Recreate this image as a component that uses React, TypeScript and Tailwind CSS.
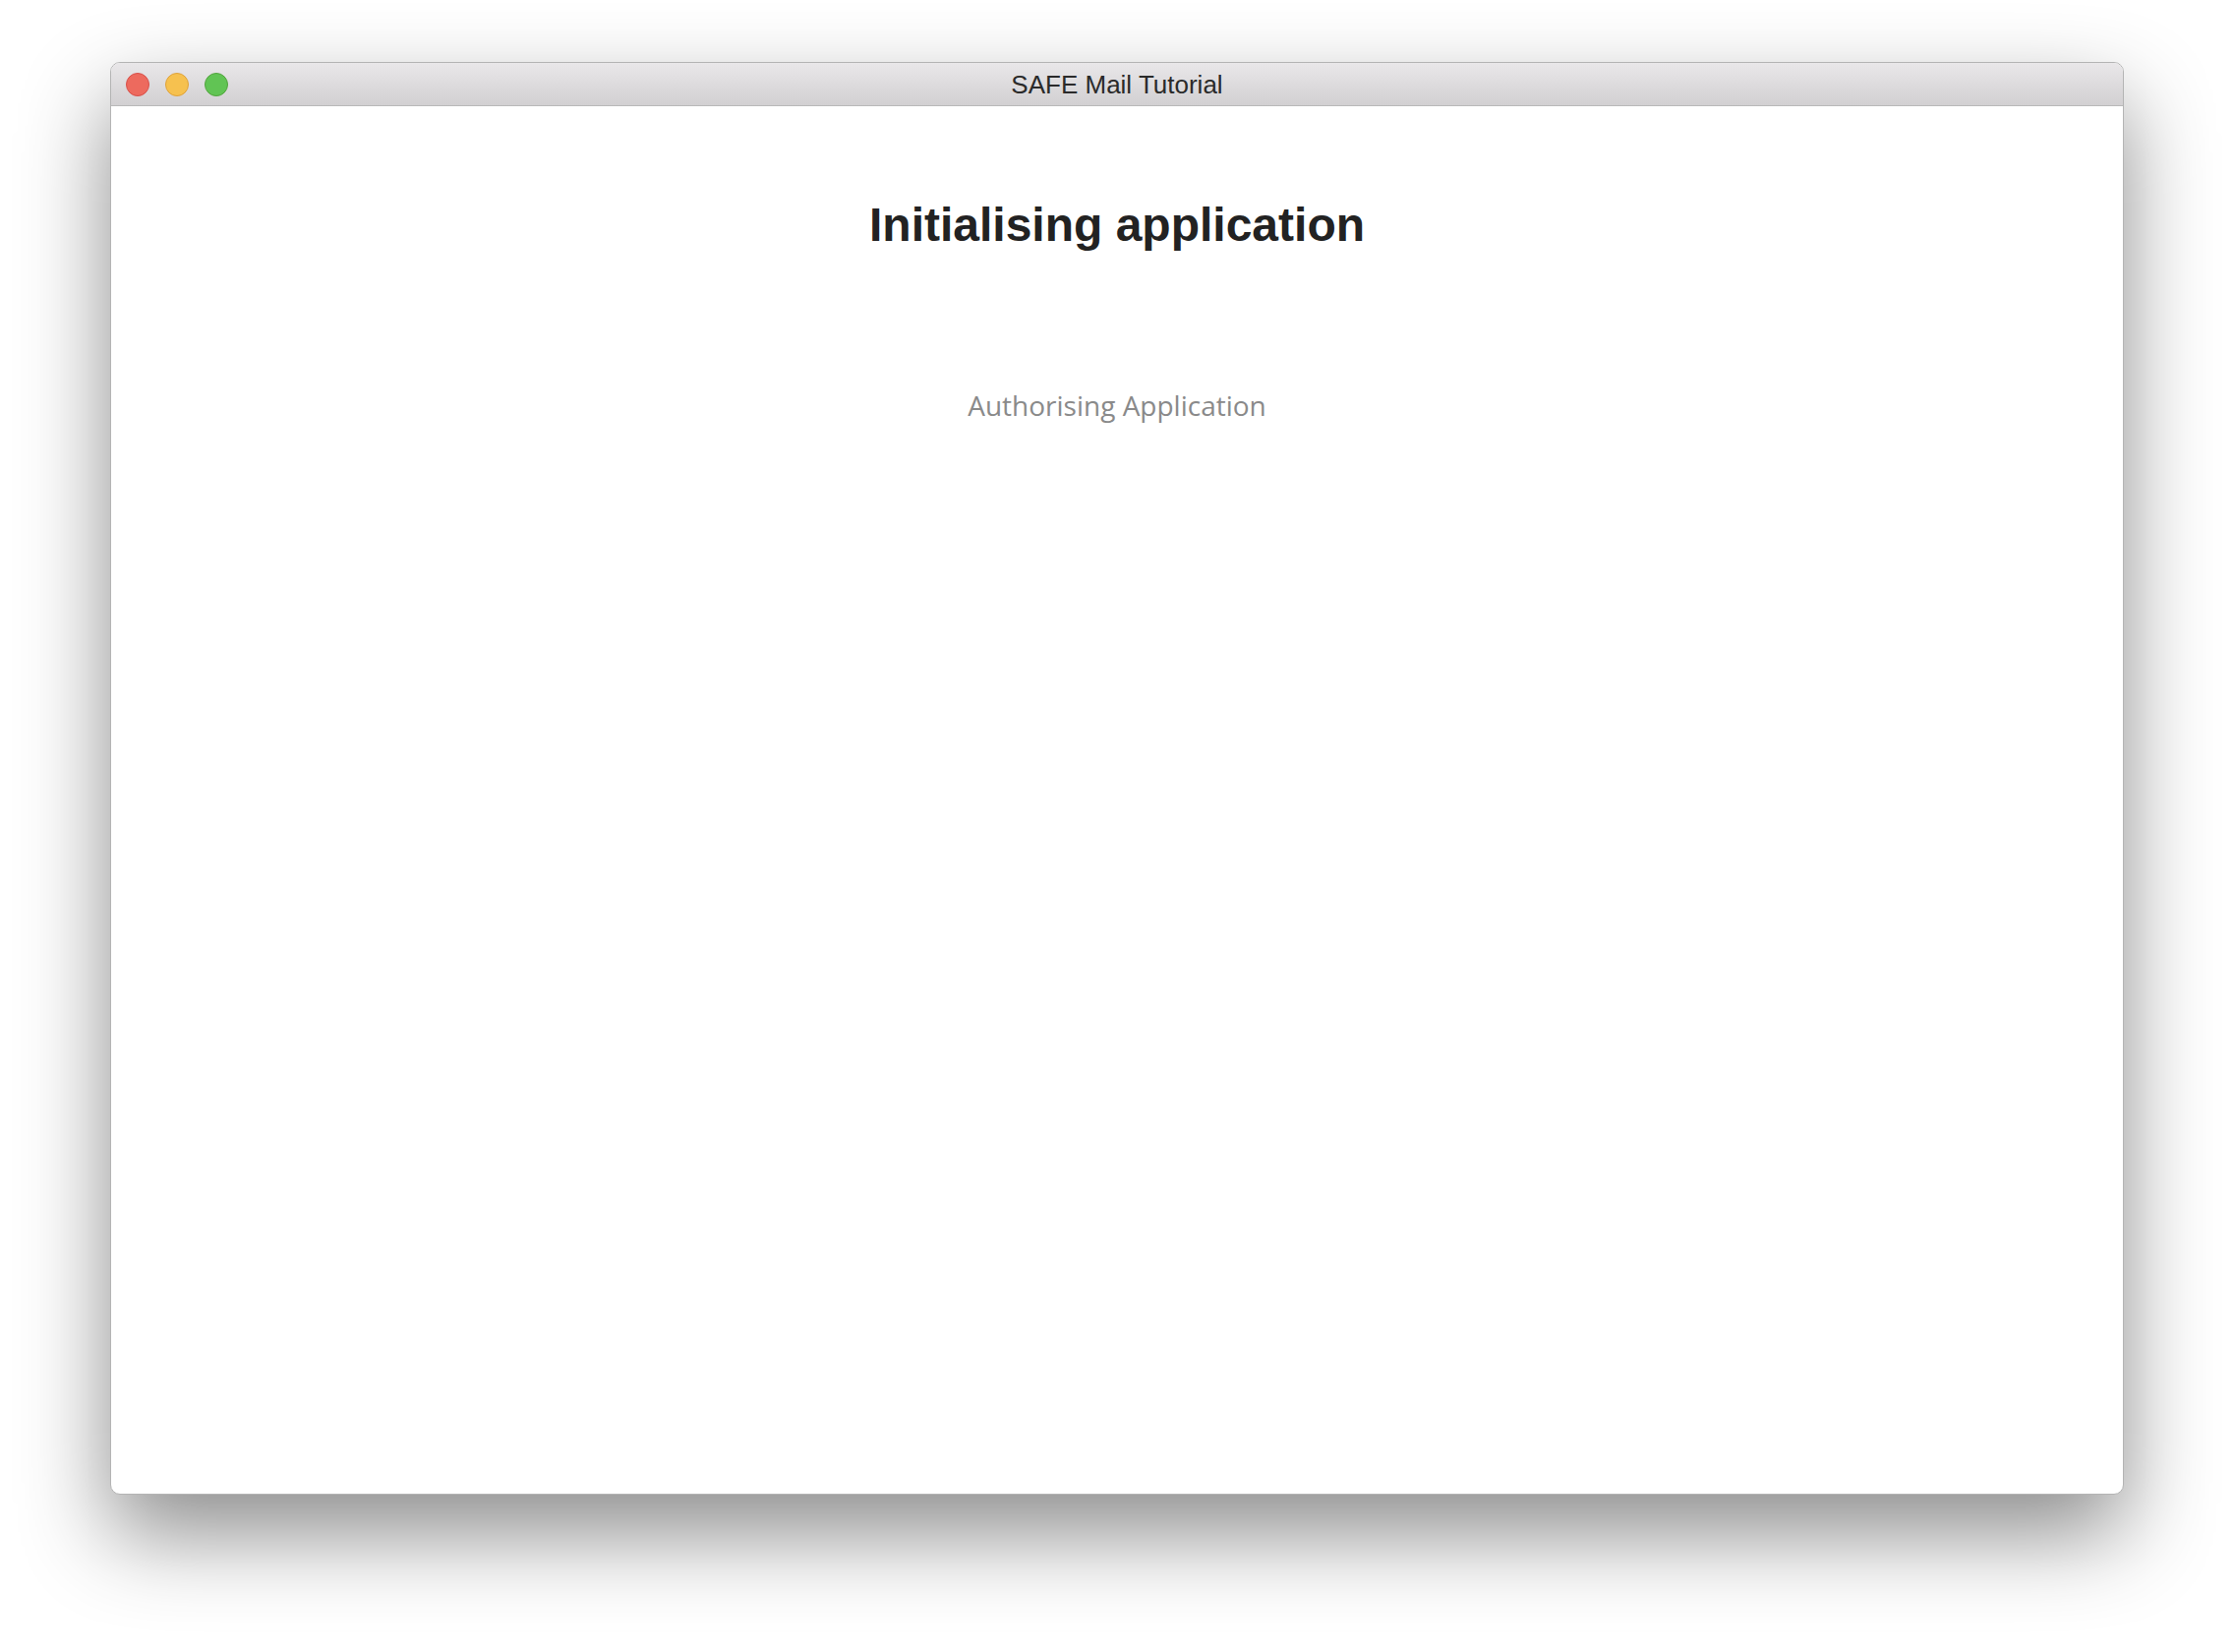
export default function App() {
  return (
    <div className="min-h-screen w-full bg-white pl-[112px] pt-[63px]">
      <div className="flex h-[1457px] w-[2048px] flex-col overflow-hidden rounded-[10px] border border-[#b4b4b4] bg-white shadow-[0_40px_90px_rgba(0,0,0,0.45)]">
        {/* Title bar */}
        <div className="relative flex h-[44px] shrink-0 items-center border-b border-[#b9b9b9] bg-gradient-to-b from-[#e9e7e9] to-[#d2d0d2] px-[15px]">
          <div className="flex items-center gap-[16px]">
            <span className="h-[24px] w-[24px] rounded-full border border-[#d8504a] bg-[#ed6a5e]" />
            <span className="h-[24px] w-[24px] rounded-full border border-[#dfa23a] bg-[#f6c14f]" />
            <span className="h-[24px] w-[24px] rounded-full border border-[#52a43d] bg-[#61c454]" />
          </div>
          <div className="absolute inset-0 flex items-center justify-center pt-[2px] font-['Liberation_Sans',Arial,sans-serif] text-[26px] text-[#2a2a2a]">
            SAFE Mail Tutorial
          </div>
        </div>

        {/* Content */}
        <div className="flex flex-1 flex-col items-center">
          <h1 className="mt-[97px] font-['Liberation_Sans',Arial,sans-serif] text-[48px] font-bold leading-none text-[#222222]">
            Initialising application
          </h1>
          <p className="mt-[145px] font-['Open_Sans',sans-serif] text-[28px] leading-none text-[#8a8a8a]">
            Authorising Application
          </p>
        </div>
      </div>
    </div>
  );
}
